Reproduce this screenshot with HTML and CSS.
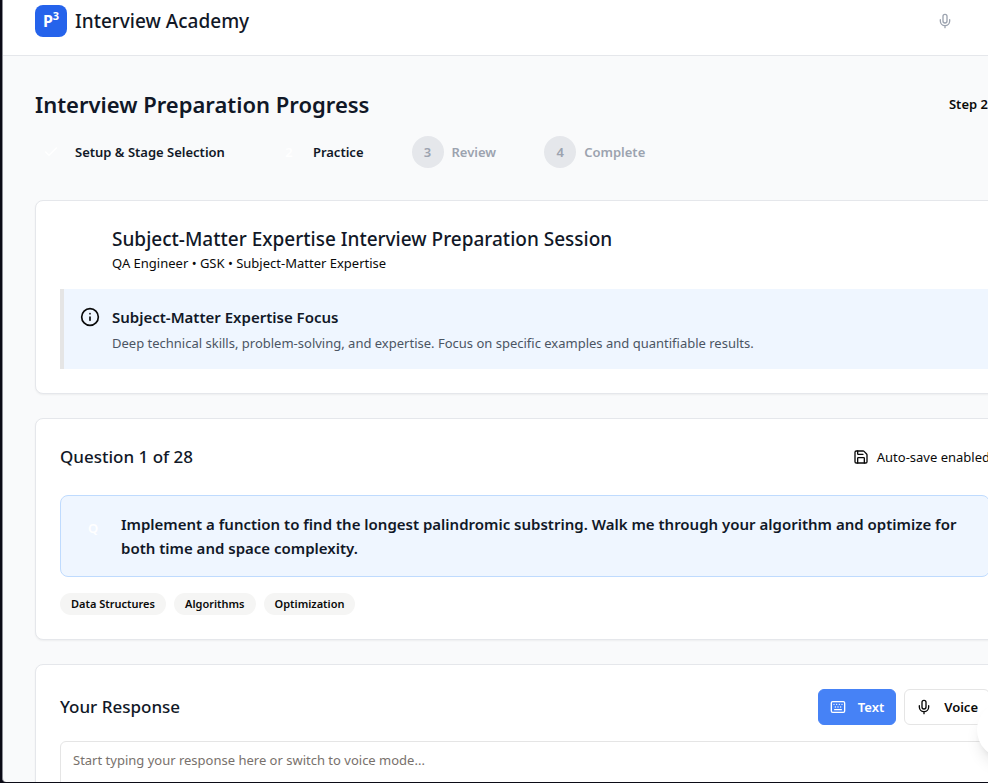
FILE: index.html
```html
<!DOCTYPE html>
<html lang="en">
<head>
<meta charset="utf-8">
<title>Interview Academy</title>
<link rel="stylesheet" href="styles.css">
</head>
<body>
<div class="app">
  <header class="topbar">
    <a class="brand" href="#"><span class="logo">P<sup>3</sup></span><span class="brand-name">Interview Academy</span></a>
    <button class="mic-button" type="button" aria-label="Microphone">
      <svg class="icon icon-md" viewBox="0 0 24 24"><rect x="9" y="2" width="6" height="13" rx="3"/><path d="M19 10v2a7 7 0 0 1-14 0v-2M12 19v3"/></svg>
    </button>
  </header>
  <main class="content">
    <section class="progress">
      <div class="row">
        <h1>Interview Preparation Progress</h1>
        <span class="step-count">Step 2 of 4</span>
      </div>
      <ol class="steps">
        <li class="step"><span class="dot"><svg class="icon icon-md" viewBox="0 0 24 24"><path d="M20 6 9 17l-5-5"/></svg></span>Setup &amp; Stage Selection</li>
        <li class="step"><span class="dot">2</span>Practice</li>
        <li class="step upcoming"><span class="dot">3</span>Review</li>
        <li class="step upcoming"><span class="dot">4</span>Complete</li>
      </ol>
    </section>

    <section class="card session">
      <div class="session-head">
        <h2>Subject-Matter Expertise Interview Preparation Session</h2>
        <p>QA Engineer • GSK • Subject-Matter Expertise</p>
      </div>
      <div class="focus">
        <svg class="icon icon-lg" viewBox="0 0 24 24"><circle cx="12" cy="12" r="10"/><path d="M12 16v-4M12 8h.01"/></svg>
        <div>
          <h3>Subject-Matter Expertise Focus</h3>
          <p>Deep technical skills, problem-solving, and expertise. Focus on specific examples and quantifiable results.</p>
        </div>
      </div>
    </section>

    <section class="card">
      <div class="row question-head">
        <h2 class="section-title">Question 1 of 28</h2>
        <span class="autosave"><svg class="icon icon-md" viewBox="0 0 24 24"><path d="M15.2 3a2 2 0 0 1 1.4.6l3.8 3.8a2 2 0 0 1 .6 1.4V19a2 2 0 0 1-2 2H5a2 2 0 0 1-2-2V5a2 2 0 0 1 2-2z"/><path d="M17 21v-7a1 1 0 0 0-1-1H8a1 1 0 0 0-1 1v7M7 3v4a1 1 0 0 0 1 1h7"/></svg>Auto-save enabled</span>
      </div>
      <div class="question">
        <span class="q-badge">Q</span>
        <p>Implement a function to find the longest palindromic substring. Walk me through your algorithm and optimize for both time and space complexity.</p>
      </div>
      <ul class="tags"><li>Data Structures</li><li>Algorithms</li><li>Optimization</li></ul>
    </section>

    <section class="card">
      <div class="row response-head">
        <h2 class="section-title"><label for="response">Your Response</label></h2>
        <div class="modes">
          <button class="mode active" type="button"><svg class="icon icon-md" viewBox="0 0 24 24"><rect x="2" y="4" width="20" height="16" rx="2"/><path d="M10 8h.01M12 12h.01M14 8h.01M16 12h.01M18 8h.01M6 8h.01M7 16h10M8 12h.01"/></svg>Text</button>
          <button class="mode" type="button"><svg class="icon icon-md" viewBox="0 0 24 24"><rect x="9" y="2" width="6" height="13" rx="3"/><path d="M19 10v2a7 7 0 0 1-14 0v-2M12 19v3"/></svg>Voice</button>
        </div>
      </div>
      <textarea id="response" rows="8" placeholder="Start typing your response here or switch to voice mode..."></textarea>
    </section>
  </main>
  <button class="fab" type="button" aria-label="Help"></button>
</div>
</body>
</html>
```
FILE: styles.css
```css
* { box-sizing: border-box; }
h1, h2, h3, p, ol, ul { margin: 0; padding: 0; list-style: none; }
body {
  margin: 0;
  background: #0b0b16;
  color: #0a0a0a;
  font: 13px/20px "Noto Sans", "Open Sans", sans-serif;
}
.app {
  position: relative;
  height: calc(100vh - 1px);
  margin-left: 2px;
  border-left: 1px solid #8b8d94;
  border-bottom-left-radius: 4px;
  background: #f9fafb;
  overflow: hidden;
}
.icon { flex: none; fill: none; stroke: currentColor; stroke-width: 2; stroke-linecap: round; stroke-linejoin: round; }
.icon-md { width: 16px; height: 16px; }
.icon-lg { width: 20px; height: 20px; }
.topbar {
  display: flex;
  align-items: center;
  justify-content: space-between;
  height: 56px;
  padding: 0 35px 14px 32px;
  background: #fff;
  border-bottom: 1px solid #e5e7eb;
}
.brand { display: flex; align-items: center; gap: 8px; color: #111827; text-decoration: none; }
.logo {
  display: grid;
  grid-auto-flow: column;
  place-content: center;
  width: 32px;
  height: 32px;
  border-radius: 8px;
  background: #2563eb;
  color: #fff;
  font-size: 16px;
  font-weight: 700;
}
.logo sup { font-size: 11px; line-height: 10px; }
.brand-name { font-size: 19px; font-weight: 500; line-height: 30px; }
.mic-button { display: flex; padding: 0; border: 0; background: none; color: #9ca3af; }
.content { margin-right: -27px; padding: 32px 0 0 32px; }
.row { display: flex; align-items: center; justify-content: space-between; }
h1 { color: #111827; font-size: 22px; font-weight: 600; line-height: 32px; }
.step-count { font-weight: 600; }
.steps { display: flex; gap: 48px; margin: 16px 0 32px; }
.step { display: flex; align-items: center; gap: 8px; color: #111827; font-weight: 600; }
.dot { display: grid; place-items: center; width: 32px; height: 32px; border-radius: 50%; color: #fff; }
.upcoming { color: #9ca3af; }
.upcoming .dot { background: #e5e7eb; color: #9ca3af; }
.card {
  margin-bottom: 24px;
  padding: 24px;
  border: 1px solid #e5e7eb;
  border-radius: 8px;
  background: #fff;
  box-shadow: 0 1px 2px rgba(0, 0, 0, 0.05);
}
.session-head { padding-left: 52px; margin-bottom: 16px; }
.session-head h2 { color: #111827; font-size: 19px; font-weight: 500; line-height: 28px; }
.focus { display: flex; gap: 12px; padding: 16px; border-left: 4px solid #e5e5e5; background: #eff6ff; }
.focus .icon { margin-top: 2px; }
.focus h3 { color: #111827; font-size: 15px; font-weight: 600; line-height: 24px; }
.focus p { margin-top: 4px; color: #4b5563; }
.section-title { color: #111827; font-size: 17px; font-weight: 500; line-height: 28px; }
.question-head { margin-bottom: 24px; }
.autosave { display: flex; align-items: center; gap: 8px; }
.question { display: flex; gap: 12px; padding: 16px; border: 1px solid #bfdbfe; border-radius: 8px; background: #eff6ff; }
.q-badge { display: grid; flex: none; place-items: center; width: 32px; height: 32px; color: #fff; font-weight: 600; }
.question p { color: #111827; font-size: 15px; font-weight: 600; line-height: 24px; }
.tags { display: flex; gap: 8px; margin-top: 16px; }
.tags li { padding: 3px 11px; border-radius: 11px; background: #f5f5f4; font-size: 11px; font-weight: 600; line-height: 16px; }
.response-head { margin-bottom: 16px; }
.modes { display: flex; gap: 8px; }
.mode {
  display: flex;
  align-items: center;
  gap: 12px;
  height: 36px;
  padding: 0 11px;
  border: 1px solid #e5e5e5;
  border-radius: 6px;
  background: #fff;
  color: #0a0a0a;
  font: inherit;
  font-weight: 600;
}
.mode.active { border-color: #4682f6; background: #4682f6; color: #fff; }
textarea {
  display: block;
  width: 100%;
  padding: 8px 12px;
  border: 1px solid #e5e5e5;
  border-radius: 6px;
  font: inherit;
  resize: none;
}
textarea::placeholder { color: #78716c; }
.fab {
  position: absolute;
  right: -45px;
  bottom: 24px;
  width: 56px;
  height: 56px;
  border: 0;
  border-radius: 50%;
  background: #fff;
  box-shadow: 0 10px 15px -3px rgba(0, 0, 0, 0.1), 0 4px 6px -4px rgba(0, 0, 0, 0.1);
}
```
